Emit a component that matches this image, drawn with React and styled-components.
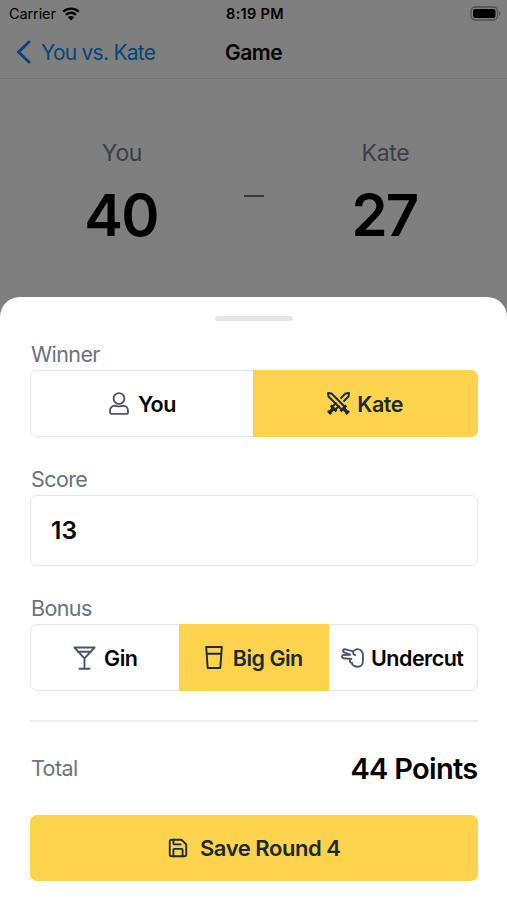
import { Save } from "lucide-react";
import styled, { createGlobalStyle } from "styled-components";

const GlobalStyle = createGlobalStyle`
  *, *::before, *::after {
    box-sizing: border-box;
  }

  body {
    margin: 0;
    font-family: Inter, "Liberation Sans", sans-serif;
    color: #000;
    background-color: #fff;
  }

  button, input {
    font-family: inherit;
    color: inherit;
  }
`;

const Screen = styled.div`
  position: relative;
  width: 507px;
  height: 900px;
  overflow: hidden;
  background-color: #fff;
`;

const StatusBar = styled.div`
  display: grid;
  grid-template-columns: 1fr auto 1fr;
  align-items: center;
  height: 27px;
  padding: 0 6px 0 9px;
  font-size: 14.5px;
`;

const Carrier = styled.div`
  display: flex;
  align-items: center;
  gap: 6px;
  letter-spacing: -0.1px;
`;

const Clock = styled.div`
  font-weight: 600;
  letter-spacing: 0.3px;
`;

const Battery = styled.div`
  display: flex;
  justify-content: flex-end;
`;

const NavBar = styled.div`
  display: grid;
  grid-template-columns: 1fr auto 1fr;
  align-items: center;
  height: 52px;
  padding: 0 16px 1px;
  border-bottom: 1px solid #eaeaea;
`;

const BackLink = styled.div`
  display: flex;
  align-items: center;
  gap: 10px;
  color: #0f88fa;
  font-size: 21px;
  letter-spacing: -0.75px;
`;

const NavTitle = styled.div`
  font-size: 21px;
  font-weight: 600;
  letter-spacing: -0.5px;
`;

const ScoreBoard = styled.div`
  display: grid;
  grid-template-columns: 244px 20px 243px;
  align-items: start;
  padding-top: 59px;
`;

const Player = styled.div`
  text-align: center;
`;

const PlayerName = styled.div`
  color: #76808f;
  font-size: 23px;
  line-height: 30px;
  letter-spacing: -0.3px;
`;

const PlayerScore = styled.div`
  margin-top: 12px;
  font-size: 58px;
  font-weight: 600;
  line-height: 70px;
  letter-spacing: -1.8px;
  text-indent: -2px;
`;

const Dash = styled.div`
  height: 2px;
  margin-top: 57px;
  background-color: #6b7280;
`;

const Overlay = styled.div`
  position: absolute;
  inset: 0;
  display: flex;
  align-items: flex-end;
  background-color: rgba(0, 0, 0, 0.5);
`;

const Sheet = styled.div`
  display: flex;
  flex-direction: column;
  width: 100%;
  height: 603px;
  padding: 19px 29.5px 0 30px;
  border-radius: 20px 20px 0 0;
  background-color: #fff;
`;

const Handle = styled.div`
  align-self: center;
  width: 78px;
  height: 5px;
  border-radius: 3px;
  background-color: #e5e5e5;
`;

const Field = styled.div`
  margin-top: ${(props) => props.$space}px;
`;

const Label = styled.div`
  color: #6b7280;
  font-size: 21.5px;
  line-height: 30px;
  letter-spacing: -0.6px;
  padding: 0 0 1px 1px;
`;

const Segments = styled.div`
  display: grid;
  grid-template-columns: repeat(${(props) => props.$count}, 1fr);
  height: 67px;
  border: 1px solid #e5e7eb;
  border-radius: 7px;
`;

const Segment = styled.button`
  display: flex;
  align-items: center;
  justify-content: center;
  gap: ${(props) => props.$gap}px;
  margin: ${(props) => (props.$active ? "-1px" : "0")};
  padding: 0;
  border: none;
  border-radius: 0;
  background-color: ${(props) => (props.$active ? "#fcd34d" : "transparent")};
  color: ${(props) => (props.$active ? "#1f2937" : "#000")};
  font-size: 21.5px;
  font-weight: 600;
  letter-spacing: -0.5px;
  white-space: nowrap;

  &:last-child {
    border-radius: 0 7px 7px 0;
  }

  svg {
    flex: none;
    color: ${(props) => (props.$active ? "#1f2937" : "#4b5570")};
  }
`;

const ScoreInput = styled.input`
  display: block;
  width: 100%;
  height: 71px;
  padding: 0 20px 2px;
  border: 1px solid #e5e7eb;
  border-radius: 7px;
  outline: none;
  background-color: #fff;
  font-size: 24.5px;
  font-weight: 600;
  letter-spacing: 0.1px;
`;

const Divider = styled.hr`
  width: 100%;
  height: 2px;
  margin: 29px 0 0;
  border: none;
  background-color: #ebecee;
`;

const TotalRow = styled.div`
  display: flex;
  align-items: center;
  justify-content: space-between;
  height: 93px;
`;

const TotalValue = styled.div`
  font-size: 29px;
  font-weight: 600;
  letter-spacing: -0.7px;
`;

const SaveButton = styled.button`
  display: flex;
  align-items: center;
  justify-content: center;
  gap: 11px;
  width: 100%;
  height: 66px;
  padding: 0 0 1px;
  border: none;
  border-radius: 7px;
  background-color: #fcd34d;
  color: #1f2937;
  font-size: 22px;
  font-weight: 600;
  letter-spacing: -0.45px;
`;

function WifiIcon() {
  return (
    <svg width="18" height="14" viewBox="0 0 18 14" fill="none">
      <path
        d="M1.2 4.7a11.3 11.3 0 0 1 15.6 0M4 7.8a7.2 7.2 0 0 1 10 0"
        stroke="#000"
        strokeWidth="2.4"
      />
      <path d="M9 13.4 5.8 10.2a4.6 4.6 0 0 1 6.4 0z" fill="#000" />
    </svg>
  );
}

function BatteryIcon() {
  return (
    <svg width="31" height="15" viewBox="0 0 31 15" fill="none">
      <rect x="1" y="1" width="26.5" height="13" rx="4" stroke="#a0a0a0" strokeWidth="1.3" />
      <rect x="3" y="3" width="22.5" height="9" rx="2" fill="#000" />
      <path d="M29 5.2c1.9.7 1.9 3.9 0 4.6z" fill="#a0a0a0" />
    </svg>
  );
}

function ChevronIcon() {
  return (
    <svg width="15" height="24" viewBox="0 0 15 24" fill="none">
      <path
        d="M13 2 2.5 12 13 22"
        stroke="currentColor"
        strokeWidth="3"
        strokeLinecap="round"
        strokeLinejoin="round"
      />
    </svg>
  );
}

function PersonIcon() {
  return (
    <svg width="20" height="23" viewBox="0 0 20 23" fill="none" stroke="currentColor" strokeWidth="1.9">
      <circle cx="10" cy="6.5" r="5.4" />
      <path
        d="M6 13.8c1.5 0 2.2.6 4 .6s2.5-.6 4-.6c3 0 5 2.2 5 5v1.400c0 1-.7 1.700-1.700 1.700H2.700C1.700 21.900 1 21.200 1 20.200v-1.400c0-2.800 2-5 5-5z"
        strokeLinejoin="round"
      />
    </svg>
  );
}

function SwordsIcon() {
  return (
    <svg
      width="23"
      height="23"
      viewBox="0 0 23 23"
      fill="none"
      stroke="currentColor"
      strokeWidth="1.9"
      strokeLinejoin="round"
    >
      <path d="M13.500 6.500 18.500 1.500 22 1l-.5 3.500-5 5M9.500 10.500 5 15M12.500 13.500 8 18" />
      <path d="M18 15 4.500 1.500 1 1l.5 3.500L15 18" />
      <path d="M3.800 13.500 9.500 19.200M19.200 13.500 13.500 19.200" strokeWidth="2.700" />
      <path d="M6.500 16.500 2.500 20.500M16.500 16.500 20.500 20.500" strokeWidth="3.400" />
      <path d="M.8 19 4 22.200M22.200 19 19 22.200" strokeWidth="2.300" />
    </svg>
  );
}

function MartiniIcon() {
  return (
    <svg
      width="23"
      height="24"
      viewBox="0 0 23 24"
      fill="none"
      stroke="currentColor"
      strokeWidth="1.9"
      strokeLinecap="round"
      strokeLinejoin="round"
    >
      <path d="M1.400 1.500h20.200L11.500 12.300zM4.800 5.700h13.400M11.500 12.300v10.300M6.500 22.800h10" />
    </svg>
  );
}

function GlassIcon() {
  return (
    <svg
      width="18"
      height="23"
      viewBox="0 0 18 23"
      fill="none"
      stroke="currentColor"
      strokeWidth="1.9"
      strokeLinejoin="round"
    >
      <path d="M1.200 1h15.600l-1.500 21H2.700zM1.700 7.700h14.600" />
    </svg>
  );
}

function ScissorsHandIcon() {
  return (
    <svg
      width="23"
      height="20"
      viewBox="0 0 23 20"
      fill="none"
      stroke="currentColor"
      strokeWidth="1.900"
      strokeLinecap="round"
      strokeLinejoin="round"
    >
      <path d="M12.300 3.300 4.200 1.300c-2.200-.4-3 2.200-1 3l6 2.400-6.700.3c-2 .2-1.900 3.200.1 3.300l7.700.7c-1.500.7-1.900 2.200-1 3.200.5.600 1.200.8 1.900.7-.3 1.400.6 2.600 2 2.800 1 .7 2.100 1 3.500 1 3.200 0 5.200-2.300 5.200-5.500V6.500c0-1.500-.6-2.700-1.500-3.700-1.500-1.500-4.500-2-6.500-.8-1.500.7-2.200 2.300-1.600 3.700.4.900 1.200 1.300 2 1.300" />
    </svg>
  );
}

function App() {
  return (
    <>
      <GlobalStyle />
      <Screen>
        <StatusBar>
          <Carrier>
            Carrier
            <WifiIcon />
          </Carrier>
          <Clock>8:19 PM</Clock>
          <Battery>
            <BatteryIcon />
          </Battery>
        </StatusBar>
        <NavBar>
          <BackLink>
            <ChevronIcon />
            You vs. Kate
          </BackLink>
          <NavTitle>Game</NavTitle>
        </NavBar>
        <ScoreBoard>
          <Player>
            <PlayerName>You</PlayerName>
            <PlayerScore>40</PlayerScore>
          </Player>
          <Dash />
          <Player>
            <PlayerName>Kate</PlayerName>
            <PlayerScore>27</PlayerScore>
          </Player>
        </ScoreBoard>
        <Overlay>
          <Sheet>
            <Handle />
            <Field $space={18}>
              <Label>Winner</Label>
              <Segments $count={2}>
                <Segment $gap={9}>
                  <PersonIcon />
                  You
                </Segment>
                <Segment $active $gap={7}>
                  <SwordsIcon />
                  Kate
                </Segment>
              </Segments>
            </Field>
            <Field $space={27}>
              <Label>Score</Label>
              <ScoreInput defaultValue="13" />
            </Field>
            <Field $space={27}>
              <Label>Bonus</Label>
              <Segments $count={3}>
                <Segment $gap={8}>
                  <MartiniIcon />
                  Gin
                </Segment>
                <Segment $active $gap={10}>
                  <GlassIcon />
                  Big Gin
                </Segment>
                <Segment $gap={7}>
                  <ScissorsHandIcon />
                  Undercut
                </Segment>
              </Segments>
            </Field>
            <Divider />
            <TotalRow>
              <Label>Total</Label>
              <TotalValue>44 Points</TotalValue>
            </TotalRow>
            <SaveButton>
              <Save size={22} />
              Save Round 4
            </SaveButton>
          </Sheet>
        </Overlay>
      </Screen>
    </>
  );
}

export default App;
